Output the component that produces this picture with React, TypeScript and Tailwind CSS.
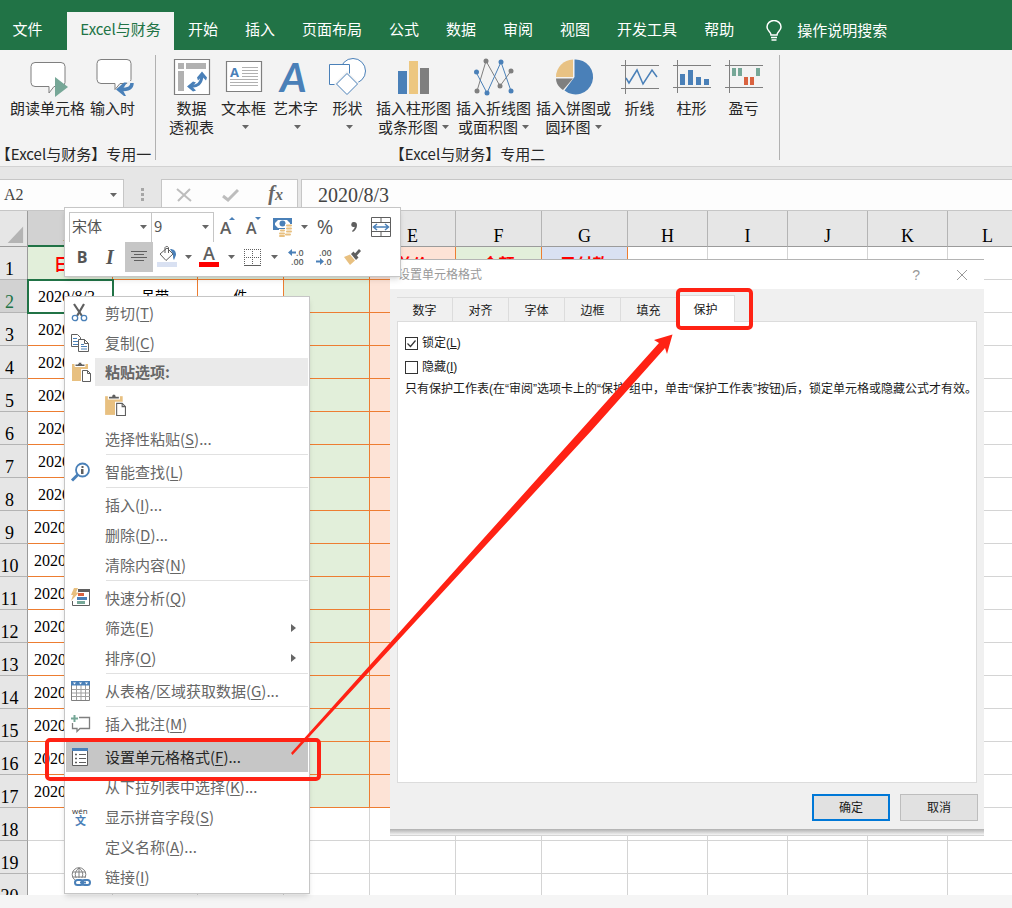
import type { ReactNode } from 'react'
import clsx from 'clsx'

const BLUE = '#4a80b8'
const GRAY = '#7f7f7f'
const DARK = '#5f5f5f'
const TAN = '#e8c080'
const GREEN = '#76a797'

const tabs = ['开始', '插入', '页面布局', '公式', '数据', '审阅', '视图', '开发工具', '帮助']

function Caret({ className }: { className?: string }) {
  return (
    <svg viewBox="0 0 7 4" className={clsx('h-1 w-[7px] shrink-0', className)} aria-hidden="true">
      <path d="M0 0h7L3.5 4z" fill="#666" />
    </svg>
  )
}

function TitleTabs() {
  return (
    <header className="flex h-[50px] items-end bg-[#217346] text-[15px] text-white">
      <button className="h-[38px] w-[67px] pr-3 pb-1">文件</button>
      <button className="h-[38px] w-[107px] bg-[#f3f3f3] pb-1 whitespace-nowrap text-[#217346]">
        Excel与财务
      </button>
      <nav className="ml-3.5 flex h-[38px] gap-[27px] whitespace-nowrap">
        {tabs.map((tab) => (
          <button key={tab} className="pb-1">
            {tab}
          </button>
        ))}
      </nav>
      <button className="ml-8 flex h-[38px] items-center gap-[15px] pb-0.5 whitespace-nowrap">
        <svg viewBox="0 0 16 21" className="h-[21px] w-4" fill="none" stroke="#fff" strokeWidth="1.5">
          <path d="M5 15c0-3-4-4-4-8a7 6.5 0 0 1 14 0c0 4-4 5-4 8z" />
          <path d="M5 17.5h6M5.5 20h5" />
        </svg>
        操作说明搜索
      </button>
    </header>
  )
}

/* ribbon */

const ribbonIcons: Record<string, ReactNode> = {
  speak: (
    <>
      <path
        d="M7 5.5h26a4 4 0 0 1 4 4v16a4 4 0 0 1-4 4H26l-5 6.500v-6.500H7a4 4 0 0 1-4-4v-16a4 4 0 0 1 4-4z"
        fill="#fff"
        stroke={GRAY}
      />
      <path d="M27 20l13 10-13 10z" fill={GREEN} />
    </>
  ),
  enter: (
    <>
      <path
        d="M8 2.500h26a4 4 0 0 1 4 4v16a4 4 0 0 1-4 4H27l-5 6v-6H8a4 4 0 0 1-4-4v-16a4 4 0 0 1 4-4z"
        fill="#fff"
        stroke={GRAY}
      />
      <path d="M39 24c0 6-4 9-12 9" stroke="#f3f3f3" strokeWidth="8" fill="none" />
      <path d="M39 26c0 5-3 6.500-12 6.500" stroke={BLUE} strokeWidth="3.5" fill="none" />
      <path d="M31 25.500l-8 7 8 6.500h2l-3.500-6.500 4.500-7z" fill={BLUE} />
    </>
  ),
  pivot: (
    <>
      <path d="M2.500 2.500h35v35h-35z" fill="#fff" stroke={GRAY} strokeWidth="1.200" />
      <path d="M6 6h6v6H6zM14 6h20v6H14zM6 14h6v20H6z" fill="#b1b1b1" />
      <path d="M18 29c7 1 12-2 12-12" stroke={BLUE} strokeWidth="3" fill="none" />
      <path d="M30 14.500l5 6-1 3-4-4-4 4-1-3zM15 29.500l6-5 3 1-4 4 4 4-3 1z" fill={BLUE} />
    </>
  ),
  textbox: (
    <>
      <path d="M2.500 4.500h35v30h-35z" fill="#fff" stroke={GRAY} strokeWidth="1.200" />
      <text x="6" y="20" fontSize="13" fontWeight="700" fill={BLUE} fontFamily="Open Sans, sans-serif">
        A
      </text>
      <path d="M18 10.500h16M18 13.500h16M18 16.500h16M18 19.500h16M6 22.500h28M6 25.500h28M6 28.500h28" stroke="#b1b1b1" />
    </>
  ),
  wordart: (
    <text x="4" y="35" fontSize="41" fontWeight="700" fontStyle="italic" fill={BLUE} fontFamily="Lato, sans-serif">
      A
    </text>
  ),
  shapes: (
    <>
      <circle cx="25" cy="14" r="12.500" fill="#fff" stroke={BLUE} />
      <path d="M1.500 7.500h20v20h-20z" fill="#fff" stroke={BLUE} />
      <path d="M19 14L32 27 19 40 6 27z" fill="#f3f3f3" />
      <path d="M19 16.500L29.500 27 19 37.500 8.500 27z" fill="#fff" stroke={BLUE} />
    </>
  ),
  bars: (
    <>
      <path d="M4 14h9v23H4z" fill={BLUE} />
      <path d="M15 4h9v33h-9z" fill="#edc780" />
      <path d="M26 11h9v26h-9z" fill={GRAY} />
    </>
  ),
  lines: (
    <>
      <path d="M3 34L12 4l14 25 11-15" fill="none" stroke={GRAY} />
      <path d="M2 15l11 21L27 5l10 29" fill="none" stroke={BLUE} />
      <g fill={GRAY}>
        <circle cx="3" cy="34" r="2.500" />
        <circle cx="12" cy="4" r="2.500" />
        <circle cx="26" cy="29" r="2.500" />
        <circle cx="37" cy="14" r="2.500" />
      </g>
      <g fill={BLUE}>
        <circle cx="2.500" cy="15" r="2.500" />
        <circle cx="13" cy="36" r="2.500" />
        <circle cx="27" cy="5" r="2.500" />
        <circle cx="37" cy="34" r="2.500" />
      </g>
    </>
  ),
  pie: (
    <>
      <path d="M20.500 20V2.500a17.500 17.500 0 1 1-10 31z" fill={BLUE} />
      <path d="M19 20V2.500A17.500 17.500 0 0 0 2 20z" fill="#e8c284" />
      <path d="M19 21.500H2c0 5 3 9 7 11.500z" fill={GRAY} />
    </>
  ),
  sparkLine: (
    <>
      <path d="M1 8.500h38M1 31.500h38M5.500 3v34" stroke={GRAY} />
      <path d="M6 21l3 5 8-13 6 14 9-14 5 7" fill="none" stroke={BLUE} strokeWidth="1.500" />
    </>
  ),
  sparkColumn: (
    <>
      <path d="M1 8.500h38M1 30.500h38M5.500 3v33" stroke={GRAY} />
      <path d="M8 17h5v11H8zM16 13h5v15h-5zM24 20h5v8h-5zM32 22h5v6h-5z" fill={BLUE} />
    </>
  ),
  winLoss: (
    <>
      <path d="M1 8.500h38M1 30.500h38M5.500 3v33" stroke={GRAY} />
      <path d="M8 11h4v8H8zM14 11h4v8h-4zM32 11h4v8h-4z" fill={GREEN} />
      <path d="M20 20h4v8h-4zM26 20h4v8h-4z" fill="#d9623f" />
    </>
  ),
}

interface RibbonItem {
  icon: string
  lines: string[]
  menu?: boolean
  width: string
}

const groupOne: RibbonItem[] = [
  { icon: 'speak', lines: ['朗读单元格'], width: 'w-[78px]' },
  { icon: 'enter', lines: ['输入时'], width: 'w-[52px]' },
]

const groupTwo: RibbonItem[] = [
  { icon: 'pivot', lines: ['数据', '透视表'], width: 'w-[52px]' },
  { icon: 'textbox', lines: ['文本框', ''], menu: true, width: 'w-[52px]' },
  { icon: 'wordart', lines: ['艺术字', ''], menu: true, width: 'w-[52px]' },
  { icon: 'shapes', lines: ['形状', ''], menu: true, width: 'w-[52px]' },
  { icon: 'bars', lines: ['插入柱形图', '或条形图'], menu: true, width: 'w-20' },
  { icon: 'lines', lines: ['插入折线图', '或面积图'], menu: true, width: 'w-20' },
  { icon: 'pie', lines: ['插入饼图或', '圆环图'], menu: true, width: 'w-20' },
  { icon: 'sparkLine', lines: ['折线'], width: 'w-[52px]' },
  { icon: 'sparkColumn', lines: ['柱形'], width: 'w-[52px]' },
  { icon: 'winLoss', lines: ['盈亏'], width: 'w-[52px]' },
]

function RibbonButton({ item }: { item: RibbonItem }) {
  return (
    <button className={clsx('flex shrink-0 flex-col items-center whitespace-nowrap', item.width)}>
      <svg viewBox="0 0 40 40" className="mb-px size-10 overflow-visible" aria-hidden="true">
        {ribbonIcons[item.icon]}
      </svg>
      {item.lines.map((line, index) => (
        <span key={index} className="flex h-[19px] items-center leading-[19px]">
          {line}
          {item.menu && index === 1 && <Caret className="ml-1" />}
        </span>
      ))}
    </button>
  )
}

function RibbonGroup({ items, caption, className }: { items: RibbonItem[]; caption: string; className: string }) {
  return (
    <section className={clsx('flex flex-col items-center justify-between border-r border-[#b1b1b1]', className)}>
      <div className="flex items-start pt-0.5">
        {items.map((item) => (
          <RibbonButton key={item.lines[0]} item={item} />
        ))}
      </div>
      <span className="leading-3 whitespace-nowrap">{caption}</span>
    </section>
  )
}

function Ribbon() {
  return (
    <div className="flex h-[117px] border-b border-[#d2d2d2] bg-[#f3f3f3] pt-[5px] pb-1.5 text-[15px] text-[#262626]">
      <RibbonGroup items={groupOne} caption="【Excel与财务】专用一" className="w-[156px] pr-3 pl-1" />
      <RibbonGroup items={groupTwo} caption="【Excel与财务】专用二" className="w-[624px]" />
    </div>
  )
}

function FormulaBar() {
  return (
    <div className="flex h-11 border-b border-[#c6c6c6] bg-[#e6e6e6] pt-3 font-['Liberation_Serif',serif] text-[#444]">
      <button
        aria-label="名称框"
        className="flex w-[124px] items-center justify-between border-t border-r border-[#c6c6c6] bg-[#fdfdfd] pr-1.5 pl-1 text-base"
      >
        A2
        <Caret />
      </button>
      <div className="flex w-[37px] flex-col items-center justify-center gap-0.5">
        <i className="size-[3px] bg-[#a6a6a6]" />
        <i className="size-[3px] bg-[#a6a6a6]" />
        <i className="size-[3px] bg-[#a6a6a6]" />
      </div>
      <div className="flex w-[137px] items-center justify-between border-x border-t border-[#c6c6c6] bg-[#fdfdfd] px-3.5">
        <button aria-label="取消输入">
          <svg viewBox="0 0 16 16" className="size-4" stroke="#bdbdbd" strokeWidth="2">
            <path d="M1 2l14 12M14 2L2 14" />
          </svg>
        </button>
        <button aria-label="输入">
          <svg viewBox="0 0 17 16" className="h-4 w-[17px]" fill="none" stroke="#bdbdbd" strokeWidth="3">
            <path d="M1 9l5 4L16 3" />
          </svg>
        </button>
        <button aria-label="插入函数" className="text-xl leading-5 font-bold italic text-[#666]">
          f<span className="text-base">x</span>
        </button>
      </div>
      <input
        aria-label="编辑栏"
        defaultValue="2020/8/3"
        className="ml-[3px] min-w-0 flex-1 border-t border-l border-[#c6c6c6] bg-[#fdfdfd] pl-4 text-xl"
      />
    </div>
  )
}

/* worksheet */

const columns = [
  { name: 'A', width: 'w-[85px]', title: '日期', fill: 'bg-[#e2efda]' },
  { name: 'B', width: 'w-[85px]', fill: 'bg-[#e2efda]' },
  { name: 'C', width: 'w-[86px]', fill: 'bg-[#e2efda]' },
  { name: 'D', width: 'w-[86px]', fill: 'bg-[#e2efda]' },
  { name: 'E', width: 'w-[86px]', title: '单价', fill: 'bg-[#fde3d6]' },
  { name: 'F', width: 'w-[86px]', title: '金额', fill: 'bg-[#e2efda]' },
  { name: 'G', width: 'w-[86px]', title: '已付款', fill: 'bg-[#d9e1f2]' },
  { name: 'H', width: 'w-20' },
  { name: 'I', width: 'w-20' },
  { name: 'J', width: 'w-20' },
  { name: 'K', width: 'w-20' },
  { name: 'L', width: 'w-20' },
]

const rowNumbers = Array.from({ length: 20 }, (_, i) => i + 1)

function cellText(row: number, col: number) {
  if (row === 1) return columns[col].title
  if (row > 17) return undefined
  if (col === 0) return `2020/8/${row + 1}`
  if (row === 2 && col === 1) return '吊带'
  if (row === 2 && col === 2) return '件'
  return undefined
}

function Worksheet() {
  return (
    <main className="h-[684px] overflow-hidden bg-white">
      <table className="w-[1028px] min-w-full table-fixed border-separate border-spacing-0 font-['Liberation_Serif','Noto_Sans_CJK_SC',serif] text-black">
        <thead>
          <tr className="h-9 bg-[#e6e6e6] text-lg leading-5">
            <th className="w-7 border-r border-b border-[#9b9b9b] p-0">
              <svg viewBox="0 0 28 36" className="block h-[35px] w-full" aria-hidden="true">
                <path d="M24 16v17H8z" fill="#b4b4b4" />
              </svg>
            </th>
            {columns.map((col) => (
              <th
                key={col.name}
                className={clsx(
                  'border-r border-r-[#b4b4b4] p-0 pt-3.5 font-normal',
                  col.width,
                  col.name === 'A' ? 'border-b-2 border-b-[#217346] bg-[#d2d2d2]' : 'border-b border-b-[#9b9b9b]',
                )}
              >
                {col.name}
              </th>
            ))}
          </tr>
        </thead>
        <tbody>
          {rowNumbers.map((row) => (
            <tr key={row} className="h-[33px]">
              <th
                className={clsx(
                  'border-r border-b border-r-[#9b9b9b] border-b-[#b4b4b4] p-0 pt-3 pr-2 text-center text-lg leading-5 font-normal',
                  row === 2 ? 'bg-[#d2d2d2] text-[#217346]' : 'bg-[#e6e6e6]',
                )}
              >
                {row}
              </th>
              {columns.map((col, index) => {
                const inTable = row <= 17 && index <= 6
                return (
                  <td
                    key={col.name}
                    className={clsx(
                      'border-r border-b p-0 leading-5 whitespace-nowrap',
                      inTable ? 'border-[#ed7d31]' : 'border-[#d4d4d4]',
                      row === 1 && 'pt-1 text-center text-base font-bold text-[#ff0000]',
                      row === 1 && col.fill,
                      row > 1 && 'pt-0.5',
                      row > 1 && inTable && index > 2 && col.fill,
                      row > 1 && index === 0 && (row < 9 ? 'pl-2.5 text-base' : 'pl-1.5 text-base'),
                      row > 1 && index > 0 && 'text-center text-sm',
                      row === 2 && index === 0 && 'outline-2 -outline-offset-1 outline-[#217346]',
                    )}
                  >
                    {cellText(row, index)}
                  </td>
                )
              })}
            </tr>
          ))}
        </tbody>
      </table>
    </main>
  )
}

/* floating format toolbar */

function ToolButton({ label, className, children }: { label: string; className: string; children: ReactNode }) {
  return (
    <button aria-label={label} className={clsx('flex h-[30px] shrink-0 items-center justify-center', className)}>
      {children}
    </button>
  )
}

function MiniSelect({ label, value, className }: { label: string; value: string; className: string }) {
  return (
    <div className={clsx('relative h-[30px] border border-[#c6c6c6]', className)}>
      <select
        aria-label={label}
        defaultValue={value}
        className="h-full w-full appearance-none bg-white pb-1 pl-0.5 text-[15px] leading-5"
      >
        <option>{value}</option>
      </select>
      <Caret className="pointer-events-none absolute top-3 right-1" />
    </div>
  )
}

function MiniToolbar() {
  return (
    <div className="absolute top-[207px] left-16 w-[337px] border border-[#c6c6c6] bg-white py-1 pl-1 text-[#555] shadow-md">
      <div className="flex">
        <MiniSelect label="字体" value="宋体" className="w-[83px]" />
        <MiniSelect label="字号" value="9" className="-ml-px w-[63px]" />
        <ToolButton label="增大字号" className="w-7">
          <svg viewBox="0 0 18 20" className="h-5 w-[18px] overflow-visible">
            <text x="1" y="17" fontSize="17" fontWeight="600" fill={DARK} fontFamily="Open Sans, sans-serif">
              A
            </text>
            <path d="M10 3l3-3 3 3z" fill={BLUE} />
          </svg>
        </ToolButton>
        <ToolButton label="减小字号" className="w-6">
          <svg viewBox="0 0 18 20" className="h-5 w-[18px] overflow-visible">
            <text x="1" y="17" fontSize="16" fontWeight="600" fill={DARK} fontFamily="Open Sans, sans-serif">
              A
            </text>
            <path d="M10 0h6l-3 3z" fill={BLUE} />
          </svg>
        </ToolButton>
        <ToolButton label="会计数字格式" className="w-[34px]">
          <svg viewBox="0 0 20 20" className="size-5">
            <path d="M0 1h19v12H0z" fill={BLUE} />
            <path d="M2 3h15v8H2z" fill="#fff" />
            <path d="M2 3h3L2 6zM17 3h-3l3 3zM2 11h3L2 8z" fill={BLUE} />
            <circle cx="9.500" cy="6.500" r="3" fill={BLUE} />
            <path d="M6 12h6V7h8v13H6z" fill="#fff" />
            <path
              d="M14 8.500h4M14 11.500h4M14 14.500h4M13 17.500h4M8 13.500h3M7 16.500h4M7 19h4"
              stroke={TAN}
              strokeWidth="2"
              strokeLinecap="round"
            />
          </svg>
        </ToolButton>
        <ToolButton label="更多会计格式" className="w-2">
          <Caret />
        </ToolButton>
        <ToolButton label="百分比样式" className="w-[34px] font-['Open_Sans',sans-serif] text-xl leading-5">
          %
        </ToolButton>
        <ToolButton label="千位分隔样式" className="w-6">
          <svg viewBox="0 0 8 12" className="h-3 w-2">
            <path d="M4 1a2.500 2.500 0 0 0-.5 5c.5 0 1 0 1.300-.2C4.500 7.500 3.500 8.800 2 10l.8 1C5.500 9.500 7 7 7 4c0-2-1.200-3-3-3z" fill={DARK} />
          </svg>
        </ToolButton>
        <ToolButton label="合并后居中" className="w-[30px]">
          <svg viewBox="0 0 20 20" className="size-5" fill="none" stroke={DARK}>
            <path d="M.5.500h19v19H.5zM.500 5.500h19M.5 14.500h19M10 .500v5M10 14.500v5" />
            <path d="M3 10h14M6 7l-3.500 3L6 13M14 7l3.500 3-3.500 3" stroke={BLUE} strokeWidth="1.500" />
          </svg>
        </ToolButton>
      </div>
      <div className="flex">
        <ToolButton label="加粗" className="w-[26px] font-['Open_Sans',sans-serif] text-base font-bold">
          B
        </ToolButton>
        <ToolButton label="倾斜" className="w-[30px] font-['Liberation_Serif',serif] text-xl font-bold italic">
          I
        </ToolButton>
        <ToolButton label="居中" className="w-7 bg-[#c6c6c6]">
          <svg viewBox="0 0 16 12" className="h-3 w-4" stroke={DARK}>
            <path d="M0 .5h16M3 3.500h10M0 6.500h16M3 9.500h10" />
          </svg>
        </ToolButton>
        <ToolButton label="填充颜色" className="w-7">
          <svg viewBox="0 0 20 20" className="size-5 overflow-visible" fill="none">
            <path d="M3 7l7-6 6 6-7 6.500z" fill="#fff" stroke={DARK} />
            <path d="M8 6V.500a2 2 0 0 1 3.500 0V6" stroke={DARK} />
            <path d="M13 2c4 0 6 2 6 6l-2 5c-1-1-1-3-1-6z" fill={BLUE} />
            <path d="M0 15h20v5H0z" fill="#d9e1f2" />
          </svg>
        </ToolButton>
        <ToolButton label="更多填充颜色" className="w-3.5">
          <Caret />
        </ToolButton>
        <ToolButton label="字体颜色" className="w-7">
          <svg viewBox="0 0 20 20" className="size-5 overflow-visible">
            <text x="4" y="13" fontSize="18" fontWeight="600" fill={DARK} fontFamily="Open Sans, sans-serif">
              A
            </text>
            <path d="M0 15h20v5H0z" fill="#ff0000" />
          </svg>
        </ToolButton>
        <ToolButton label="更多字体颜色" className="w-4">
          <Caret />
        </ToolButton>
        <ToolButton label="边框" className="w-[26px]">
          <svg viewBox="0 0 17 17" className="size-[17px]" stroke={DARK} fill="none">
            <path d="M.5 0v16M8.500 0v16M16.500 0v16M0 .500h17M0 8.500h17" strokeDasharray="1 1" />
            <path d="M0 16.500h17" />
          </svg>
        </ToolButton>
        <ToolButton label="更多边框" className="w-[18px]">
          <Caret />
        </ToolButton>
        <ToolButton label="增加小数位数" className="w-[26px]">
          <svg viewBox="0 0 16 18" className="h-[18px] w-4 overflow-visible" fontSize="9" fontWeight="600" fontFamily="Open Sans, sans-serif">
            <path d="M0 4.500L4 1v2.500h4v2H4V8z" fill={BLUE} />
            <text x="8" y="8" fill={DARK}>
              .0
            </text>
            <text x="3" y="17" fill={DARK}>
              .00
            </text>
          </svg>
        </ToolButton>
        <ToolButton label="减少小数位数" className="w-[30px]">
          <svg viewBox="0 0 16 18" className="h-[18px] w-4 overflow-visible" fontSize="9" fontWeight="600" fontFamily="Open Sans, sans-serif">
            <path d="M8 13.500L4 10v2.500H0v2h4V17z" fill={BLUE} />
            <text x="3" y="8" fill={DARK}>
              .00
            </text>
            <text x="8" y="17" fill={DARK}>
              .0
            </text>
          </svg>
        </ToolButton>
        <ToolButton label="格式刷" className="w-[26px]">
          <svg viewBox="0 0 17 16" className="h-4 w-[17px]">
            <path d="M0 8l6-2.500 5 6L6 16z" fill={TAN} />
            <path d="M7 5l2.500-2.500 5 6L12 11z" fill={DARK} />
            <path d="M10.500 5L15 0l2 2-4.500 5z" fill={DARK} />
          </svg>
        </ToolButton>
      </div>
    </div>
  )
}

/* context menu */

const pasteIcon = (
  <>
    <path d="M1 2h16v17H1z" fill={TAN} />
    <path d="M4 4.500V2h3a2 2 0 0 1 4 0h3v2.500z" fill={DARK} stroke="#fff" />
    <path d="M10 7h8l2 2v11H10z" fill="#fff" />
    <path d="M11.500 8.500h5l3 3v8h-8z" fill="#fff" stroke={DARK} />
    <path d="M16.500 8.500v3h3" fill="none" stroke={DARK} />
  </>
)

const menuIcons: Record<string, ReactNode> = {
  cut: (
    <>
      <path d="M3 1l8 12M13 1L6 13" stroke={DARK} strokeWidth="2.200" fill="none" />
      <circle cx="4" cy="15" r="2.700" fill="none" stroke={BLUE} strokeWidth="1.300" />
      <circle cx="13" cy="15" r="2.700" fill="none" stroke={BLUE} strokeWidth="1.300" />
    </>
  ),
  copy: (
    <>
      <path d="M.5 1.500h6l3 3v9h-9z" fill="#fff" stroke={DARK} />
      <path d="M2 5.500h4M2 8.500h5M2 11.500h5" stroke={BLUE} />
      <path d="M7.500 6.500h6l4 4v8h-10z" fill="#fff" stroke={DARK} />
      <path d="M13.500 6.500v4h4" fill="none" stroke={DARK} />
      <path d="M10 11.500h3M10 13.500h6M10 16h6" stroke={BLUE} />
    </>
  ),
  paste: pasteIcon,
  search: (
    <>
      <circle cx="11.500" cy="8" r="6.500" fill="#fff" stroke={BLUE} strokeWidth="1.800" />
      <path d="M7 12.500l-6 6" stroke={BLUE} strokeWidth="3" />
      <path d="M10.500 4h2v2h-2zM10 7h2.500v5H10z" fill={DARK} />
    </>
  ),
  quick: (
    <>
      <path d="M7 1.500h11.500v16H1.500V13" fill="#fff" stroke={DARK} />
      <path d="M7 1h12v3H7z" fill={DARK} />
      <path d="M7 5h6v3H7z" fill="#d9623f" />
      <path d="M6 9h10v3H6z" fill={BLUE} />
      <path d="M6 13h8v3H6z" fill={GREEN} />
      <path d="M3 0h4L5 4.500h3L0 13l2-6H0z" fill={TAN} />
    </>
  ),
  table: (
    <>
      <path d="M.5 1.500h18v18H.5z" fill="#fff" stroke={GRAY} />
      <path d="M1 8.500h18M1 12h18M1 15.500h18M5.500 4v15M10 4v15M14.500 4v15" stroke="#a0a0a0" />
      <path d="M0 0h19v4.500H0z" fill={BLUE} />
      <path d="M2 1.500h3L3.500 3.500zM8 1.500h3L9.500 3.500zM14 1.500h3l-1.500 2z" fill="#fff" />
    </>
  ),
  comment: (
    <>
      <path d="M8 3.500h10.500v11H9l-3 3v-3H1.500V9" fill="none" stroke={GRAY} strokeWidth="1.300" />
      <path d="M3.500 1v7M0 4.500h7" stroke={GREEN} strokeWidth="2" />
    </>
  ),
  format: (
    <>
      <path d="M1.500 1.500h15v17h-15z" fill="#fff" stroke={DARK} />
      <path d="M1 1h16v3H1z" fill={BLUE} />
      <path d="M8 7.500h7M8 11.500h7M8 15.500h7" stroke={DARK} />
      <path d="M4 7.500h2M4 11.500h2M4 15.500h2" stroke={DARK} strokeWidth="1.500" />
    </>
  ),
  pinyin: (
    <>
      <text x="1" y="7" fontSize="8" fill="#333" fontFamily="Open Sans, sans-serif">
        wén
      </text>
      <text x="4" y="18" fontSize="11" fontWeight="700" fill={BLUE} fontFamily="Noto Sans CJK SC, sans-serif">
        文
      </text>
    </>
  ),
  link: (
    <>
      <circle cx="8" cy="7.500" r="6.800" fill="none" stroke={GRAY} />
      <path d="M8 1v13M1.500 5h13M1.500 10h13M8 1c-5 4-5 9 0 13M8 1c5 4 5 9 0 13" fill="none" stroke={GRAY} />
      <path d="M4 11h16v9H4z" fill="#fff" />
      <rect x="4" y="13" width="8" height="5" rx="2.500" fill="none" stroke={BLUE} strokeWidth="2" />
      <rect x="11" y="13" width="8" height="5" rx="2.500" fill="none" stroke={BLUE} strokeWidth="2" />
      <path d="M9 15.500h6" stroke={BLUE} strokeWidth="2" />
    </>
  ),
}

interface MenuEntry {
  text: string
  hotkey: string
  icon?: string
  dots?: boolean
  submenu?: boolean
  selected?: boolean
}

const menuTop: MenuEntry[] = [
  { text: '剪切', hotkey: 'T', icon: 'cut' },
  { text: '复制', hotkey: 'C', icon: 'copy' },
]

const menuSections: MenuEntry[][] = [
  [{ text: '选择性粘贴', hotkey: 'S', dots: true }],
  [{ text: '智能查找', hotkey: 'L', icon: 'search' }],
  [
    { text: '插入', hotkey: 'I', dots: true },
    { text: '删除', hotkey: 'D', dots: true },
    { text: '清除内容', hotkey: 'N' },
  ],
  [
    { text: '快速分析', hotkey: 'Q', icon: 'quick' },
    { text: '筛选', hotkey: 'E', submenu: true },
    { text: '排序', hotkey: 'O', submenu: true },
  ],
  [{ text: '从表格/区域获取数据', hotkey: 'G', icon: 'table', dots: true }],
  [{ text: '插入批注', hotkey: 'M', icon: 'comment' }],
  [
    { text: '设置单元格格式', hotkey: 'F', icon: 'format', dots: true, selected: true },
    { text: '从下拉列表中选择', hotkey: 'K', dots: true },
    { text: '显示拼音字段', hotkey: 'S', icon: 'pinyin' },
    { text: '定义名称', hotkey: 'A', dots: true },
    { text: '链接', hotkey: 'I', icon: 'link' },
  ],
]

function MenuIcon({ name }: { name?: string }) {
  return (
    <svg viewBox="0 0 20 20" className="size-5 shrink-0 overflow-visible" aria-hidden="true">
      {name && menuIcons[name]}
    </svg>
  )
}

function MenuItem({ entry }: { entry: MenuEntry }) {
  return (
    <button
      role="menuitem"
      className={clsx(
        'flex h-[30px] w-full items-center pl-[5px] text-left whitespace-nowrap',
        entry.selected && 'bg-[#c6c6c6] text-[#262626]',
      )}
    >
      <MenuIcon name={entry.icon} />
      <span className="ml-3.5 flex-1">
        {entry.text}(<u className="underline-offset-2">{entry.hotkey}</u>){entry.dots && '...'}
      </span>
      {entry.submenu && (
        <svg viewBox="0 0 5 8" className="mr-3 h-2 w-[5px]" aria-hidden="true">
          <path d="M0 0l5 4-5 4z" fill="#666" />
        </svg>
      )}
    </button>
  )
}

function ContextMenu() {
  return (
    <div
      role="menu"
      className="absolute top-[296px] left-16 w-[246px] border border-[#c6c6c6] bg-white p-px text-[15px] text-[#666] shadow-md"
    >
      {menuTop.map((entry) => (
        <MenuItem key={entry.text} entry={entry} />
      ))}
      <div className="flex h-7 items-center gap-1 pl-[5px]">
        <MenuIcon name="paste" />
        <div className="flex h-full flex-1 items-center bg-[#eaeaea] pl-2.5 font-bold">粘贴选项:</div>
      </div>
      <button role="menuitem" aria-label="粘贴" className="flex h-[38px] items-center pl-[38px]">
        <svg viewBox="0 0 20 20" className="size-[22px] overflow-visible" aria-hidden="true">
          {pasteIcon}
        </svg>
      </button>
      {menuSections.map((section, index) => (
        <div key={index}>
          {index > 0 && <div className="mb-0.5 ml-10 h-px bg-[#e1e1e1]" />}
          {section.map((entry) => (
            <MenuItem key={entry.text} entry={entry} />
          ))}
        </div>
      ))}
    </div>
  )
}

/* format cells dialog */

const dialogTabs = ['数字', '对齐', '字体', '边框', '填充']

function FormatDialog() {
  return (
    <div
      role="dialog"
      aria-label="设置单元格格式"
      className="absolute top-[259px] left-[390px] w-[594px] border-t border-[#b4b4b4] bg-[#f0f0f0] font-['Liberation_Sans','Noto_Sans_CJK_SC',sans-serif] text-xs text-[#1a1a1a]"
    >
      <div className="flex h-[29px] items-center bg-white pr-4 pl-2 text-[#999]">
        <span className="flex-1">设置单元格格式</span>
        <button className="mr-9 text-sm" aria-label="帮助">
          ?
        </button>
        <button aria-label="关闭">
          <svg viewBox="0 0 12 12" className="size-3" stroke="#999">
            <path d="M1 1l10 10M11 1L1 11" />
          </svg>
        </button>
      </div>
      <div className="px-[7px] pt-1.5">
        <div role="tablist" className="flex items-end">
          {dialogTabs.map((tab) => (
            <button
              key={tab}
              role="tab"
              className="h-[25px] w-14 border-t border-r border-b border-[#dcdcdc] bg-[#f0f0f0] pt-0.5"
            >
              {tab}
            </button>
          ))}
          <button
            role="tab"
            aria-selected="true"
            className="h-[27px] w-[58px] border-t border-r border-[#dcdcdc] bg-white pt-0.5"
          >
            保护
          </button>
          <span className="flex-1 border-b border-[#dcdcdc]" />
        </div>
        <div className="h-[461px] border border-t-0 border-[#dcdcdc] bg-white pt-[9px] pl-[7px]">
          <DialogCheckbox label="锁定" hotkey="L" checked />
          <DialogCheckbox label="隐藏" hotkey="I" />
          <p className="leading-5 whitespace-nowrap">
            只有保护工作表(在“审阅”选项卡上的“保护”组中，单击“保护工作表”按钮)后，锁定单元格或隐藏公式才有效。
          </p>
        </div>
      </div>
      <div className="flex justify-end gap-2.5 pt-[11px] pr-1.5 pb-2">
        <button className="h-[27px] w-[78px] border-2 border-[#0078d7] bg-[#e1e1e1]">确定</button>
        <button className="h-[27px] w-[78px] border border-[#bdbdbd] bg-[#e1e1e1]">取消</button>
      </div>
      <div className="h-[7px] border-b border-[#d4d4d4] bg-linear-to-b from-[#b0b0b0] to-[#f4f4f4]" />
    </div>
  )
}

function DialogCheckbox({ label, hotkey, checked }: { label: string; hotkey: string; checked?: boolean }) {
  return (
    <label className="flex h-6 items-center gap-1">
      <span className="grid size-[13px] place-items-center">
        <input
          type="checkbox"
          defaultChecked={checked}
          className="peer col-start-1 row-start-1 size-[13px] appearance-none border border-[#333] bg-white"
        />
        <svg
          viewBox="0 0 11 11"
          className="invisible col-start-1 row-start-1 size-[11px] peer-checked:visible"
          fill="none"
          stroke="#333"
          strokeWidth="1.200"
        >
          <path d="M1.500 5.500l3 3 5-6" />
        </svg>
      </span>
      <span>
        {label}(<u>{hotkey}</u>)
      </span>
    </label>
  )
}

function Annotations() {
  return (
    <svg
      viewBox="0 0 1012 908"
      className="pointer-events-none absolute top-0 left-0 h-[908px] w-[1012px]"
      aria-hidden="true"
    >
      <g fill="none" stroke="#ff2214" strokeWidth="4">
        <rect x="678" y="290" width="73" height="38" rx="3" />
        <rect x="47" y="740" width="272" height="39" rx="3" />
      </g>
      <path d="M291 753L581 430l78-87-5-3 18.500-5.500L667 354l-2-6-73 82-299.500 325z" fill="#ff2214" />
    </svg>
  )
}

export default function App() {
  return (
    <div className="relative min-h-screen overflow-hidden bg-[#f5f5f5] font-['Noto_Sans_CJK_SC',sans-serif]">
      <TitleTabs />
      <Ribbon />
      <FormulaBar />
      <Worksheet />
      <FormatDialog />
      <MiniToolbar />
      <ContextMenu />
      <Annotations />
    </div>
  )
}
